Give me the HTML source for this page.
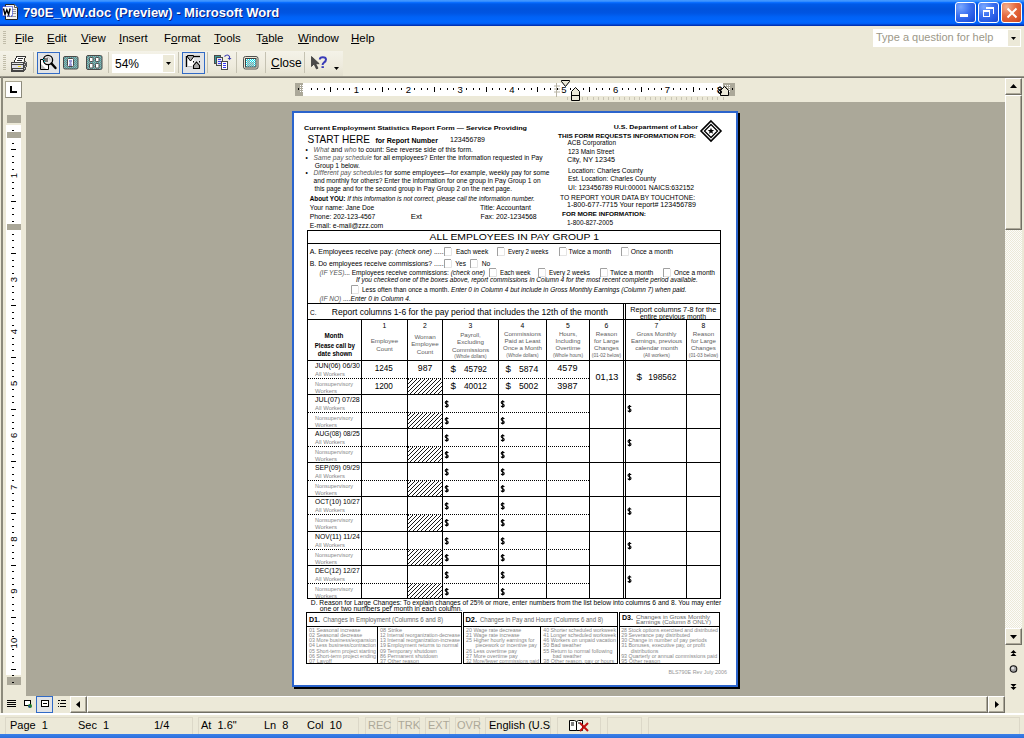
<!DOCTYPE html>
<html><head><meta charset="utf-8">
<style>
*{margin:0;padding:0;box-sizing:border-box}
html,body{width:1024px;height:738px;overflow:hidden;background:#ECE9D8;font-family:"Liberation Sans",sans-serif;position:relative}
.a{position:absolute}
svg{position:absolute;overflow:visible}
#title{left:0;top:0;width:1024px;height:26px;background:linear-gradient(#4499FF 0px,#3B92FF 1.2px,#0A6EFF 2.5px,#005AE8 4px,#0053DC 9px,#0055E2 13px,#0062F6 17px,#0066FF 22px,#005CF2 24px,#0034B8 25px,#0030B0 26px)}
#title .t{left:23px;top:5px;color:#fff;font-weight:bold;font-size:13px;white-space:nowrap;text-shadow:1px 1px 0 #0A1E80}
.wb{top:2px;width:21px;height:21px;border:1px solid #fff;border-radius:3px;background:radial-gradient(circle at 25% 20%,#7AA8FF,#3A70F0 45%,#2155E0 80%,#1A48C8)}
#menu{left:0;top:26px;width:1024px;height:25px;background:#ECE9D8}
#menu span{position:absolute;top:6px;font-size:11.5px;color:#000;white-space:nowrap}
u{text-decoration:underline;text-decoration-thickness:1px;text-underline-offset:0.5px}
#tb{left:0;top:51px;width:1024px;height:25px;background:#ECE9D8}
.grip{width:3px;background:repeating-linear-gradient(#C1BDA9 0 1px,transparent 1px 2px)}
.sep{width:1px;height:21px;top:52px;background:#C5C2B2}
.selb{top:52px;height:22px;border:1px solid #316AC5;background:#E1E3E6}
#main{left:26px;top:102px;width:979px;height:594px;background:#ABA899}
.st{position:absolute;top:719px;font-size:11px;color:#000;white-space:nowrap}
.sdiv{position:absolute;top:716px;width:2px;height:16px;border-left:1px solid #D6D2C2;border-right:1px solid #fff}
</style></head><body>
<!-- title bar -->
<div id="title" class="a">
  <svg style="left:0;top:0" width="20" height="22">
  <path d="M5.5 4.5h9l3 3v12h-12z" fill="#F4F4F0" stroke="#222"/>
  <path d="M14.5 4.5v3h3" fill="#fff" stroke="#555"/>
  <path d="M12 9.5h4M12 11.5h4M12 13.5h4M7 16.5h9" stroke="#999"/>
  <rect x="2.5" y="6.5" width="10" height="9.5" fill="#fff" stroke="#1020D0" stroke-dasharray="1 1"/>
  <path d="M3.5 8.5l1.5 6 1.8-4.5 1.8 4.5 1.5-6" fill="none" stroke="#000" stroke-width="1.4"/>
</svg>
  <div class="a t">790E_WW.doc (Preview) - Microsoft Word</div>
  <div class="a wb" style="left:955px"><div class="a" style="left:4px;top:11px;width:8px;height:3px;background:#fff"></div></div>
  <div class="a wb" style="left:978px"><div class="a" style="left:4px;top:7px;width:7px;height:7px;border:1.5px solid #fff;border-top-width:2px"></div><div class="a" style="left:7px;top:4px;width:8px;height:7px;border:1.5px solid #fff;border-top-width:2px;border-left:none;border-bottom:none"></div></div>
  <div class="a wb" style="left:1001px;background:radial-gradient(circle at 25% 20%,#F4B090,#E5693E 45%,#D8532A 80%,#C24018)"><svg style="left:3px;top:3px" width="14" height="14"><path d="M2.5 2.5L11.5 11.5M11.5 2.5L2.5 11.5" stroke="#fff" stroke-width="2"/></svg></div>
</div>
<!-- menu bar -->
<div id="menu" class="a">
  <div class="a grip" style="left:3px;top:5px;height:14px"></div>
  <span style="left:15px"><u>F</u>ile</span><span style="left:47px"><u>E</u>dit</span><span style="left:81px"><u>V</u>iew</span><span style="left:119px"><u>I</u>nsert</span><span style="left:164px">F<u>o</u>rmat</span><span style="left:214px"><u>T</u>ools</span><span style="left:256px">T<u>a</u>ble</span><span style="left:298px"><u>W</u>indow</span><span style="left:351px"><u>H</u>elp</span>
  <div class="a" style="left:873px;top:3px;width:148px;height:18px;background:#fff"><span style="left:3px;top:2px;color:#9C9888;font-size:11px">Type a question for help</span>
    <div class="a" style="left:135px;top:1px;width:12px;height:16px;background:#ECE9D8"><svg style="left:3px;top:7px" width="6" height="4"><path d="M0 0h5l-2.5 3z" fill="#000"/></svg></div></div>
</div>
<!-- toolbar -->
<div id="tb" class="a">
  <div class="a" style="left:0;top:0;width:343px;height:25px;background:linear-gradient(#F4F2E8,#EEEBDD 60%,#E4E1D0)"></div>
</div>
<div class="a grip" style="left:3px;top:55px;height:15px"></div>
<svg style="left:8px;top:52px" width="24" height="22" shape-rendering="crispEdges">
  <path d="M8 4h9v1h-1v1h-1v4H6V8h1V6h1z" fill="#fff"/>
  <path d="M8 4h9M8 4v2M7 6v2M6 8v2M17 4v2M16 6v4M10 6h5M9 8h5" stroke="#333" fill="none"/>
  <rect x="3" y="10" width="13" height="10" fill="#444"/>
  <rect x="4" y="11" width="11" height="1" fill="#E4E4E4"/>
  <rect x="4" y="13" width="11" height="3" fill="#E0E0E8"/>
  <rect x="10" y="14" width="3" height="1" fill="#F0E020"/>
  <rect x="5" y="17" width="10" height="1" fill="#DCDCDC"/>
  <path d="M16 9h2v1h1v5h-1v3h-1v1h-1z" fill="#555"/>
  <path d="M17 10h1M16 12h1M17 14h1M16 16h1" stroke="#ccc"/>
</svg>
<div class="a sep" style="left:33px"></div>
<div class="a selb" style="left:37px;width:23px"></div>
<svg style="left:36px;top:51px" width="26" height="24">
  <path d="M4.5 8.5h8v10h-8z" fill="#fff" stroke="#000"/>
  <path d="M5 13l5 5H5z" fill="#C0C0C0"/>
  <circle cx="12" cy="9" r="4.6" fill="#E8E8E8" stroke="#000" stroke-width="1.3"/>
  <path d="M11 6.5a2.5 2.5 0 0 1 3 3" stroke="#bbb" fill="none"/>
  <path d="M7 8h5M8 10h4" stroke="#000" stroke-width="1"/>
  <path d="M7 8.5h1M8 10.5h1" stroke="#00E0F0" stroke-width="1.2"/>
  <path d="M15.5 12.5L19.5 17" stroke="#000" stroke-width="2.4" stroke-linecap="round"/>
</svg>
<svg style="left:63px;top:56px" width="16" height="14">
  <defs><pattern id="dt" width="2" height="2" patternUnits="userSpaceOnUse"><rect width="2" height="2" fill="#3FA5A5"/><rect width="1" height="1" fill="#A8A8A8"/><rect x="1" y="1" width="1" height="1" fill="#A8A8A8"/></pattern></defs>
  <rect x="0.5" y="0.5" width="14.5" height="12.5" rx="1.5" fill="url(#dt)" stroke="#4A4A4A"/>
  <rect x="4.5" y="2.5" width="6" height="8" rx="1" fill="#fff" stroke="#4A4A4A"/>
  <path d="M6 5h3M6.5 7h2M6 9h3" stroke="#3030B0"/>
</svg>
<svg style="left:86px;top:55px" width="17" height="16">
  <rect x="0.5" y="0.5" width="15.5" height="14" rx="1.5" fill="url(#dt)" stroke="#4A4A4A"/>
  <rect x="3.5" y="2.5" width="3.5" height="4" rx="0.8" fill="#fff" stroke="#4A4A4A"/>
  <rect x="9.5" y="2.5" width="3.5" height="4" rx="0.8" fill="#fff" stroke="#4A4A4A"/>
  <rect x="3.5" y="8.5" width="3.5" height="4.5" rx="0.8" fill="#fff" stroke="#4A4A4A"/>
  <rect x="9.5" y="8.5" width="3.5" height="4.5" rx="0.8" fill="#fff" stroke="#4A4A4A"/>
</svg>
<div class="a sep" style="left:108px"></div>
<div class="a" style="left:112px;top:54px;width:63px;height:19px;background:#fff">
  <span class="a" style="left:3px;top:3px;font-size:12px">54%</span>
  <div class="a" style="left:51px;top:1px;width:11px;height:17px;background:#ECE9D8"><svg style="left:3px;top:7px" width="6" height="4"><path d="M0 0h5l-2.5 3z" fill="#000"/></svg></div>
</div>
<div class="a sep" style="left:178px"></div>
<div class="a selb" style="left:182px;width:23px"></div>
<svg style="left:180px;top:51px" width="26" height="24">
  <path d="M6 5h8v10H6z" fill="#fff"/>
  <path d="M6.5 5v11" stroke="#000" stroke-width="1.4"/>
  <path d="M14 5.5h6" stroke="#000" stroke-width="1.3"/>
  <path d="M7 15.5h5" stroke="#bbb"/>
  <path d="M7.5 4.5h6v1.5l-3 4-3-4z" fill="#aaa" stroke="#000" stroke-width="1"/>
  <path d="M13.5 17.5v-3l3-3.5 3 3.5v3z" fill="#aaa" stroke="#000" stroke-width="1.1"/>
  <rect x="13" y="10" width="1" height="1.5" fill="#000"/><rect x="19" y="10" width="1" height="1.5" fill="#000"/>
</svg>
<div class="a sep" style="left:207px"></div>
<svg style="left:210px;top:52px" width="24" height="20">
  <rect x="4.5" y="3.5" width="6" height="8" fill="#3A9A98" stroke="#4A4A4A"/>
  <rect x="6.5" y="5.5" width="6" height="8" fill="#E8E8F0" stroke="#4A4A4A"/>
  <path d="M8 7.5h3M8 9.5h3M8 11.5h3" stroke="#3838F0"/>
  <rect x="11.5" y="9.5" width="6" height="8" fill="#fff" stroke="#4A4A4A"/>
  <path d="M13 11.5h3M13 13.5h3M13 15.5h3" stroke="#3838F0"/>
  <path d="M14.5 4.5q3-3 5 0v2" fill="none" stroke="#3A3AB0" stroke-width="1.1"/><path d="M17.5 6h4l-2 2z" fill="#3A3AB0"/>
</svg>
<div class="a sep" style="left:236px"></div>
<svg style="left:243px;top:56px" width="16" height="14">
  <defs><pattern id="cy" width="2" height="2" patternUnits="userSpaceOnUse"><rect width="2" height="2" fill="#00E8F8"/><rect width="1" height="1" fill="#fff"/><rect x="1" y="1" width="1" height="1" fill="#fff"/></pattern></defs>
  <rect x="0.5" y="0.5" width="14.5" height="12.5" rx="2" fill="#ECE9D8" stroke="#505050"/>
  <rect x="2.5" y="2.5" width="10.5" height="8.5" fill="url(#cy)" stroke="#404040"/>
  <path d="M4 5h3M4 7h7M4 9h7" stroke="#999"/>
</svg>
<div class="a sep" style="left:265px"></div>
<span class="a" style="left:271px;top:56px;font-size:12px"><u>C</u>lose</span>
<div class="a sep" style="left:304px"></div>
<svg style="left:310px;top:56px" width="20" height="16">
  <path d="M1.5 0.5v10l2.5-2.5 2.5 5 1.5-0.8-2.3-4.5h3.5z" fill="#4A4A4A" stroke="#3A3A3A" stroke-width="0.8"/>
  <path d="M9.8 3.6Q9.8 1.2 12.8 1.2Q16 1.2 16 3.6Q16 5.4 14 6.5Q12.6 7.4 12.6 9" fill="none" stroke="#3A3CB8" stroke-width="2"/>
  <rect x="11.5" y="10.2" width="2.4" height="1.8" fill="#3A3CB8"/>
</svg>
<svg style="left:334px;top:67px" width="6" height="4"><path d="M0 0h5l-2.5 3z" fill="#000"/></svg>
<div class="a" style="left:0;top:76px;width:1024px;height:1px;background:#9A978A"></div>
<div class="a" style="left:0;top:77px;width:1024px;height:1px;background:#75736A"></div>
<!-- frame left -->
<div class="a" style="left:1px;top:77px;width:2px;height:619px;background:#8C8A7C"></div>
<!-- main gray -->
<div id="main" class="a"></div>
<div class="a" style="left:5px;top:81px;width:17px;height:17px;background:#fff;border:1px solid #A8A490;border-right-color:#8C8A7C;border-bottom-color:#8C8A7C"><svg style="left:4px;top:4px" width="8" height="8"><path d="M1 0v6h6" stroke="#000" stroke-width="2" fill="none"/></svg></div>
<div class="a" style="left:295px;top:83px;width:440px;height:13px;background:#fff"></div>
<div class="a" style="left:295px;top:83px;width:8px;height:13px;background:#ABA899"></div>
<div class="a" style="left:723px;top:83px;width:12px;height:13px;background:#ABA899"></div>
<!--HR--><svg style="left:0;top:0" width="1024" height="110" font-family="Liberation Sans"><rect x="300" y="85" width="1" height="1" fill="#fff"/><rect x="300" y="87" width="1" height="1" fill="#fff"/><rect x="300" y="89" width="1" height="1" fill="#fff"/><rect x="300" y="91" width="1" height="1" fill="#fff"/><rect x="302" y="85" width="1" height="1" fill="#fff"/><rect x="302" y="87" width="1" height="1" fill="#fff"/><rect x="302" y="89" width="1" height="1" fill="#fff"/><rect x="302" y="91" width="1" height="1" fill="#fff"/><rect x="304" y="85" width="1" height="1" fill="#fff"/><rect x="304" y="87" width="1" height="1" fill="#fff"/><rect x="304" y="89" width="1" height="1" fill="#fff"/><rect x="304" y="91" width="1" height="1" fill="#fff"/><rect x="725" y="85" width="1" height="1" fill="#fff"/><rect x="725" y="87" width="1" height="1" fill="#fff"/><rect x="725" y="89" width="1" height="1" fill="#fff"/><rect x="725" y="91" width="1" height="1" fill="#fff"/><rect x="727" y="85" width="1" height="1" fill="#fff"/><rect x="727" y="87" width="1" height="1" fill="#fff"/><rect x="727" y="89" width="1" height="1" fill="#fff"/><rect x="727" y="91" width="1" height="1" fill="#fff"/><rect x="729" y="85" width="1" height="1" fill="#fff"/><rect x="729" y="87" width="1" height="1" fill="#fff"/><rect x="729" y="89" width="1" height="1" fill="#fff"/><rect x="729" y="91" width="1" height="1" fill="#fff"/><path d="M556.5 83v14M554 86h6M554 89h6M554 92h6" stroke="#B8B4A4" stroke-width="1"/><rect x="298" y="88" width="1" height="2"/><rect x="298" y="88" width="1" height="2"/><rect x="311" y="88" width="1" height="2"/><rect x="317" y="88" width="1" height="2"/><rect x="324" y="88" width="1" height="2"/><rect x="330" y="87" width="1" height="5"/><rect x="337" y="88" width="1" height="2"/><rect x="343" y="88" width="1" height="2"/><rect x="349" y="88" width="1" height="2"/><text x="356.4" y="92.8" font-size="9.5" text-anchor="middle">1</text><rect x="362" y="88" width="1" height="2"/><rect x="369" y="88" width="1" height="2"/><rect x="375" y="88" width="1" height="2"/><rect x="382" y="87" width="1" height="5"/><rect x="388" y="88" width="1" height="2"/><rect x="395" y="88" width="1" height="2"/><rect x="401" y="88" width="1" height="2"/><text x="408.3" y="92.8" font-size="9.5" text-anchor="middle">2</text><rect x="414" y="88" width="1" height="2"/><rect x="421" y="88" width="1" height="2"/><rect x="427" y="88" width="1" height="2"/><rect x="434" y="87" width="1" height="5"/><rect x="440" y="88" width="1" height="2"/><rect x="447" y="88" width="1" height="2"/><rect x="453" y="88" width="1" height="2"/><text x="460.1" y="92.8" font-size="9.5" text-anchor="middle">3</text><rect x="466" y="88" width="1" height="2"/><rect x="473" y="88" width="1" height="2"/><rect x="479" y="88" width="1" height="2"/><rect x="486" y="87" width="1" height="5"/><rect x="492" y="88" width="1" height="2"/><rect x="499" y="88" width="1" height="2"/><rect x="505" y="88" width="1" height="2"/><text x="512.0" y="92.8" font-size="9.5" text-anchor="middle">4</text><rect x="518" y="88" width="1" height="2"/><rect x="524" y="88" width="1" height="2"/><rect x="531" y="88" width="1" height="2"/><rect x="537" y="87" width="1" height="5"/><rect x="544" y="88" width="1" height="2"/><rect x="550" y="88" width="1" height="2"/><rect x="557" y="88" width="1" height="2"/><text x="563.8" y="92.8" font-size="9.5" text-anchor="middle">5</text><rect x="570" y="88" width="1" height="2"/><rect x="576" y="88" width="1" height="2"/><rect x="583" y="88" width="1" height="2"/><rect x="589" y="87" width="1" height="5"/><rect x="596" y="88" width="1" height="2"/><rect x="602" y="88" width="1" height="2"/><rect x="609" y="88" width="1" height="2"/><text x="615.6" y="92.8" font-size="9.5" text-anchor="middle">6</text><rect x="622" y="88" width="1" height="2"/><rect x="628" y="88" width="1" height="2"/><rect x="635" y="88" width="1" height="2"/><rect x="641" y="87" width="1" height="5"/><rect x="648" y="88" width="1" height="2"/><rect x="654" y="88" width="1" height="2"/><rect x="661" y="88" width="1" height="2"/><text x="667.5" y="92.8" font-size="9.5" text-anchor="middle">7</text><rect x="673" y="88" width="1" height="2"/><rect x="680" y="88" width="1" height="2"/><rect x="686" y="88" width="1" height="2"/><rect x="693" y="87" width="1" height="5"/><rect x="699" y="88" width="1" height="2"/><rect x="706" y="88" width="1" height="2"/><rect x="712" y="88" width="1" height="2"/><text x="719.3" y="92.8" font-size="9.5" text-anchor="middle">8</text><rect x="725" y="88" width="1" height="2"/><rect x="732" y="88" width="1" height="2"/><rect x="567" y="97" width="1" height="3" fill="#C8C4B4"/><rect x="582" y="97" width="1" height="3" fill="#C8C4B4"/><rect x="587" y="97" width="1" height="3" fill="#C8C4B4"/><rect x="593" y="97" width="1" height="3" fill="#C8C4B4"/><rect x="598" y="97" width="1" height="3" fill="#C8C4B4"/><rect x="603" y="97" width="1" height="3" fill="#C8C4B4"/><rect x="608" y="97" width="1" height="3" fill="#C8C4B4"/><rect x="613" y="97" width="1" height="3" fill="#C8C4B4"/><rect x="619" y="97" width="1" height="3" fill="#C8C4B4"/><rect x="624" y="97" width="1" height="3" fill="#C8C4B4"/><rect x="629" y="97" width="1" height="3" fill="#C8C4B4"/><rect x="634" y="97" width="1" height="3" fill="#C8C4B4"/><rect x="639" y="97" width="1" height="3" fill="#C8C4B4"/><rect x="645" y="97" width="1" height="3" fill="#C8C4B4"/><rect x="650" y="97" width="1" height="3" fill="#C8C4B4"/><rect x="655" y="97" width="1" height="3" fill="#C8C4B4"/><rect x="660" y="97" width="1" height="3" fill="#C8C4B4"/><rect x="665" y="97" width="1" height="3" fill="#C8C4B4"/><rect x="671" y="97" width="1" height="3" fill="#C8C4B4"/><rect x="676" y="97" width="1" height="3" fill="#C8C4B4"/><rect x="681" y="97" width="1" height="3" fill="#C8C4B4"/><rect x="686" y="97" width="1" height="3" fill="#C8C4B4"/><rect x="691" y="97" width="1" height="3" fill="#C8C4B4"/><rect x="697" y="97" width="1" height="3" fill="#C8C4B4"/><rect x="702" y="97" width="1" height="3" fill="#C8C4B4"/><rect x="707" y="97" width="1" height="3" fill="#C8C4B4"/><rect x="712" y="97" width="1" height="3" fill="#C8C4B4"/><rect x="717" y="97" width="1" height="3" fill="#C8C4B4"/><rect x="723" y="97" width="1" height="3" fill="#C8C4B4"/><path d="M561.5 80.5h8v1l-4 5-4-5z" fill="#ECE9D8" stroke="#000"/><path d="M571.5 100.5v-9l4-4 4 4v9z" fill="#ECE9D8" stroke="#000"/><path d="M571.5 95.5h8" stroke="#000"/><path d="M720.5 95.5v-5l4-4 4 4v5z" fill="#ECE9D8" stroke="#000"/><circle cx="720" cy="88.5" r="1.6" fill="none" stroke="#000"/><circle cx="720" cy="92" r="1.6" fill="none" stroke="#000"/></svg><!--/HR-->
<div class="a" style="left:7px;top:115px;width:14px;height:8px;background:#ABA899"></div>
<div class="a" style="left:6px;top:125px;width:15px;height:550px;background:#fff"></div>
<div class="a" style="left:7px;top:132px;width:14px;height:6px;background:#ABA899"></div>
<div class="a" style="left:7px;top:677px;width:14px;height:8px;background:#ABA899"></div>
<!--VR--><svg style="left:0;top:0" width="30" height="700" font-family="Liberation Sans"><rect x="12" y="130" width="2" height="1"/><rect x="12" y="143" width="2" height="1"/><rect x="11" y="149" width="5" height="1"/><rect x="12" y="156" width="2" height="1"/><rect x="12" y="162" width="2" height="1"/><rect x="12" y="169" width="2" height="1"/><text transform="translate(17.3 175.7) rotate(-90)" font-size="9.5" text-anchor="middle">1</text><rect x="12" y="182" width="2" height="1"/><rect x="12" y="188" width="2" height="1"/><rect x="12" y="195" width="2" height="1"/><rect x="11" y="201" width="5" height="1"/><rect x="12" y="208" width="2" height="1"/><rect x="12" y="214" width="2" height="1"/><rect x="12" y="221" width="2" height="1"/><rect x="12" y="234" width="2" height="1"/><rect x="12" y="240" width="2" height="1"/><rect x="12" y="247" width="2" height="1"/><rect x="11" y="253" width="5" height="1"/><rect x="12" y="260" width="2" height="1"/><rect x="12" y="266" width="2" height="1"/><rect x="12" y="273" width="2" height="1"/><text transform="translate(17.3 279.6) rotate(-90)" font-size="9.5" text-anchor="middle">3</text><rect x="12" y="286" width="2" height="1"/><rect x="12" y="292" width="2" height="1"/><rect x="12" y="299" width="2" height="1"/><rect x="11" y="305" width="5" height="1"/><rect x="12" y="312" width="2" height="1"/><rect x="12" y="318" width="2" height="1"/><rect x="12" y="325" width="2" height="1"/><text transform="translate(17.3 331.5) rotate(-90)" font-size="9.5" text-anchor="middle">4</text><rect x="12" y="338" width="2" height="1"/><rect x="12" y="344" width="2" height="1"/><rect x="12" y="350" width="2" height="1"/><rect x="11" y="357" width="5" height="1"/><rect x="12" y="363" width="2" height="1"/><rect x="12" y="370" width="2" height="1"/><rect x="12" y="376" width="2" height="1"/><text transform="translate(17.3 383.4) rotate(-90)" font-size="9.5" text-anchor="middle">5</text><rect x="12" y="389" width="2" height="1"/><rect x="12" y="396" width="2" height="1"/><rect x="12" y="402" width="2" height="1"/><rect x="11" y="409" width="5" height="1"/><rect x="12" y="415" width="2" height="1"/><rect x="12" y="422" width="2" height="1"/><rect x="12" y="428" width="2" height="1"/><text transform="translate(17.3 435.4) rotate(-90)" font-size="9.5" text-anchor="middle">6</text><rect x="12" y="441" width="2" height="1"/><rect x="12" y="448" width="2" height="1"/><rect x="12" y="454" width="2" height="1"/><rect x="11" y="461" width="5" height="1"/><rect x="12" y="467" width="2" height="1"/><rect x="12" y="474" width="2" height="1"/><rect x="12" y="480" width="2" height="1"/><text transform="translate(17.3 487.3) rotate(-90)" font-size="9.5" text-anchor="middle">7</text><rect x="12" y="493" width="2" height="1"/><rect x="12" y="500" width="2" height="1"/><rect x="12" y="506" width="2" height="1"/><rect x="11" y="513" width="5" height="1"/><rect x="12" y="519" width="2" height="1"/><rect x="12" y="526" width="2" height="1"/><rect x="12" y="532" width="2" height="1"/><text transform="translate(17.3 539.2) rotate(-90)" font-size="9.5" text-anchor="middle">8</text><rect x="12" y="545" width="2" height="1"/><rect x="12" y="552" width="2" height="1"/><rect x="12" y="558" width="2" height="1"/><rect x="11" y="565" width="5" height="1"/><rect x="12" y="571" width="2" height="1"/><rect x="12" y="578" width="2" height="1"/><rect x="12" y="584" width="2" height="1"/><text transform="translate(17.3 591.2) rotate(-90)" font-size="9.5" text-anchor="middle">9</text><rect x="12" y="597" width="2" height="1"/><rect x="12" y="604" width="2" height="1"/><rect x="12" y="610" width="2" height="1"/><rect x="11" y="617" width="5" height="1"/><rect x="12" y="623" width="2" height="1"/><rect x="12" y="630" width="2" height="1"/><rect x="12" y="636" width="2" height="1"/><text transform="translate(17.3 643.1) rotate(-90)" font-size="9.5" text-anchor="middle">10</text><rect x="12" y="649" width="2" height="1"/><rect x="12" y="656" width="2" height="1"/><rect x="12" y="662" width="2" height="1"/><rect x="11" y="669" width="5" height="1"/><rect x="12" y="675" width="2" height="1"/><rect x="12" y="682" width="2" height="1"/></svg><!--/VR-->
<div class="a" style="left:7px;top:224px;width:14px;height:6px;background:#ABA899"></div>
<div class="a" style="left:1005px;top:78px;width:17px;height:618px;background:#F4F3EE;background-image:repeating-conic-gradient(#ECE9D8 0 25%,#FCFCFA 0 50%);background-size:2px 2px"></div>
<div class="a" style="left:1005px;top:78px;width:17px;height:17px;background:#ECE9D8;border-top:1px solid #fff;border-left:1px solid #fff;border-right:1px solid #716F64;border-bottom:1px solid #716F64;box-shadow:inset -1px -1px 0 #ACA899"><svg style="left:4px;top:5px" width="8" height="5"><path d="M0 4h7l-3.5-4z" fill="#000"/></svg></div>
<div class="a" style="left:1005px;top:95px;width:17px;height:135px;background:#ECE9D8;border-top:1px solid #fff;border-left:1px solid #fff;border-right:1px solid #716F64;border-bottom:1px solid #716F64;box-shadow:inset -1px -1px 0 #ACA899"></div>
<div class="a" style="left:1005px;top:628px;width:17px;height:17px;background:#ECE9D8;border-top:1px solid #fff;border-left:1px solid #fff;border-right:1px solid #716F64;border-bottom:1px solid #716F64;box-shadow:inset -1px -1px 0 #ACA899"><svg style="left:4px;top:6px" width="8" height="5"><path d="M0 0h7l-3.5 4z" fill="#000"/></svg></div>
<div class="a" style="left:1005px;top:645px;width:17px;height:51px;background:#ECE9D8"></div>
<svg style="left:1005px;top:645px" width="17" height="51"><path d="M5.5 8h6l-3-3z M5.5 11h6l-3-3z" fill="#000"/><circle cx="8.5" cy="24" r="3.3" fill="#A0A0A0" stroke="#111" stroke-width="1.1"/><circle cx="7.8" cy="23.2" r="1.4" fill="#E0E0E0"/><path d="M5.5 39h6l-3 3z M5.5 42h6l-3 3z" fill="#000"/></svg>

<div class="a" style="left:0;top:696px;width:1024px;height:18px;background:#ECE9D8"></div>
<div class="a" style="left:1px;top:696px;width:2px;height:17px;background:#8C8A7C"></div>
<svg style="left:0;top:696px" width="70" height="17"><path d="M7 4.5h9M7 6.5h9M7 8.5h9M7 10.5h9" stroke="#000"/><rect x="24.5" y="4.5" width="6" height="5" fill="#fff" stroke="#000"/><circle cx="30" cy="10" r="2" fill="#208020"/><circle cx="29.5" cy="10.5" r="1" fill="#2040C0"/><rect x="36.5" y="0.5" width="16" height="16" fill="#E1E3E6" stroke="#316AC5"/><rect x="41.5" y="4.5" width="7" height="6" fill="#fff" stroke="#000"/><path d="M43 7.5h4" stroke="#000"/><path d="M58 4.5h2M61 4.5h5M60 7.5h6M60 10.5h6M58 10.5h1M58 7.5h1" stroke="#000"/></svg>
<div class="a" style="left:70px;top:696px;width:17px;height:17px;background:#ECE9D8;border-top:1px solid #fff;border-left:1px solid #fff;border-right:1px solid #716F64;border-bottom:1px solid #716F64;box-shadow:inset -1px -1px 0 #ACA899"><svg style="left:5px;top:4px" width="5" height="8"><path d="M4 0v7l-4-3.5z" fill="#000"/></svg></div>
<div class="a" style="left:87px;top:696px;width:901px;height:17px;background:#ECE9D8;border-top:1px solid #fff;border-left:1px solid #fff;border-right:1px solid #716F64;border-bottom:1px solid #716F64;box-shadow:inset -1px -1px 0 #ACA899"></div>
<div class="a" style="left:988px;top:696px;width:17px;height:17px;background:#ECE9D8;border-top:1px solid #fff;border-left:1px solid #fff;border-right:1px solid #716F64;border-bottom:1px solid #716F64;box-shadow:inset -1px -1px 0 #ACA899"><svg style="left:6px;top:4px" width="5" height="8"><path d="M0 0v7l4-3.5z" fill="#000"/></svg></div>
<div class="a" style="left:0;top:713px;width:1024px;height:2px;background:#fff"></div>
<div class="a" style="left:0;top:715px;width:1024px;height:19px;background:#ECE9D8"></div>
<div class="a" style="left:5px;top:717px;width:188px;height:17px;border:1px solid #DCD8C8;border-bottom:none"></div>
<div class="a" style="left:198px;top:717px;width:161px;height:17px;border:1px solid #DCD8C8;border-bottom:none"></div>
<div class="a" style="left:365px;top:717px;width:26px;height:17px;border:1px solid #DCD8C8;border-bottom:none"></div>
<div class="a" style="left:397px;top:717px;width:23px;height:17px;border:1px solid #DCD8C8;border-bottom:none"></div>
<div class="a" style="left:425px;top:717px;width:25px;height:17px;border:1px solid #DCD8C8;border-bottom:none"></div>
<div class="a" style="left:455px;top:717px;width:25px;height:17px;border:1px solid #DCD8C8;border-bottom:none"></div>
<div class="a" style="left:485px;top:717px;width:66px;height:17px;border:1px solid #DCD8C8;border-bottom:none"></div>
<div class="a" style="left:557px;top:717px;width:44px;height:17px;border:1px solid #DCD8C8;border-bottom:none"></div>
<div class="a" style="left:607px;top:717px;width:35px;height:17px;border:1px solid #DCD8C8;border-bottom:none"></div>
<div class="a" style="left:648px;top:717px;width:372px;height:17px;border:1px solid #DCD8C8;border-bottom:none"></div>
<span class="st" style="left:10px;color:#000">Page&nbsp; 1</span>
<span class="st" style="left:78px;color:#000">Sec&nbsp; 1</span>
<span class="st" style="left:154px;color:#000">1/4</span>
<span class="st" style="left:201px;color:#000">At&nbsp; 1.6"</span>
<span class="st" style="left:264px;color:#000">Ln&nbsp; 8</span>
<span class="st" style="left:307px;color:#000">Col&nbsp; 10</span>
<span class="st" style="left:368px;color:#ACA899">REC</span>
<span class="st" style="left:398px;color:#ACA899">TRK</span>
<span class="st" style="left:428px;color:#ACA899">EXT</span>
<span class="st" style="left:457px;color:#ACA899">OVR</span>
<span class="st" style="left:489px;color:#000">English (U.S</span>
<svg style="left:568px;top:718px" width="22" height="14"><path d="M1.5 2.5h5l2 1v9h-7z M8.5 3.5l2-1h4v10h-6" fill="#fff" stroke="#000"/><path d="M3 5h3M3 7h3M10 5h3" stroke="#000"/><path d="M12 5l8 8M20 5l-8 8" stroke="#C01010" stroke-width="2"/></svg>
<div class="a" style="left:0;top:734px;width:1024px;height:4px;background:linear-gradient(#3A80E8,#2C6FDC)"></div>
<!--PAGE--><svg style="left:0;top:0" width="1024" height="738" font-family="Liberation Sans"><defs><pattern id="hatch" width="4" height="4" patternUnits="userSpaceOnUse"><path d="M-1 1L1 -1M0 4L4 0M3 5L5 3" stroke="#000" stroke-width="0.9"/></pattern></defs><rect x="292" y="111" width="446" height="576" fill="#2B64CC"/><rect x="294" y="113" width="442" height="572" fill="#fff"/><rect x="738" y="113" width="2" height="576" fill="#000"/><rect x="294" y="687" width="446" height="2" fill="#000"/><text x="304.0" y="129.7" font-size="6.2" textLength="223.0" lengthAdjust="spacingAndGlyphs" font-weight="bold">Current Employment Statistics Report Form — Service Providing</text><text x="307.5" y="143.3" font-size="10.5" textLength="62.5" lengthAdjust="spacingAndGlyphs">START HERE</text><text x="375.4" y="142.5" font-size="6.5" textLength="62.6" lengthAdjust="spacingAndGlyphs" font-weight="bold">for Report Number</text><text x="450.0" y="142.1" font-size="6.5" textLength="35.0" lengthAdjust="spacingAndGlyphs">123456789</text><text x="305.5" y="151.8" font-size="6.5">•</text><text x="305.5" y="160.1" font-size="6.5">•</text><text x="305.5" y="175.2" font-size="6.5">•</text><text x="313.6" y="151.8" font-size="6.5" textLength="159.4" lengthAdjust="spacingAndGlyphs"><tspan font-style="italic" fill="#555">What</tspan><tspan> and </tspan><tspan font-style="italic" fill="#555">who</tspan><tspan> to count: See reverse side of this form.</tspan></text><text x="313.6" y="160.1" font-size="6.5" textLength="229.0" lengthAdjust="spacingAndGlyphs"><tspan font-style="italic" fill="#555">Same pay schedule</tspan><tspan> for all employees? Enter the information requested in Pay</tspan></text><text x="314.7" y="168.0" font-size="6.5" textLength="45.3" lengthAdjust="spacingAndGlyphs">Group 1 below.</text><text x="313.6" y="175.2" font-size="6.5" textLength="235.8" lengthAdjust="spacingAndGlyphs"><tspan font-style="italic" fill="#555">Different pay schedules</tspan><tspan> for some employees—for example, weekly pay for some</tspan></text><text x="313.6" y="183.0" font-size="6.5" textLength="227.0" lengthAdjust="spacingAndGlyphs">and monthly for others? Enter the information for one group in Pay Group 1 on</text><text x="314.5" y="191.1" font-size="6.5" textLength="197.5" lengthAdjust="spacingAndGlyphs">this page and for the second group in Pay Group 2 on the next page.</text><text x="309.8" y="200.6" font-size="6.5" textLength="225.0" lengthAdjust="spacingAndGlyphs"><tspan font-weight="bold">About YOU: </tspan><tspan font-style="italic">If this information is not correct, please call the information number.</tspan></text><text x="309.8" y="210.2" font-size="6.5" textLength="64.5" lengthAdjust="spacingAndGlyphs">Your name:  Jane Doe</text><text x="480.0" y="210.2" font-size="6.5" textLength="51.0" lengthAdjust="spacingAndGlyphs">Title:  Accountant</text><text x="309.8" y="219.0" font-size="6.5" textLength="65.6" lengthAdjust="spacingAndGlyphs">Phone:  202-123-4567</text><text x="410.7" y="219.0" font-size="6.5" textLength="11.3" lengthAdjust="spacingAndGlyphs">Ext</text><text x="480.5" y="219.0" font-size="6.5" textLength="56.2" lengthAdjust="spacingAndGlyphs">Fax:  202-1234568</text><text x="309.8" y="228.2" font-size="6.5" textLength="73.5" lengthAdjust="spacingAndGlyphs">E-mail:  e-mail@zzz.com</text><text x="613.8" y="129.4" font-size="6.2" textLength="84.2" lengthAdjust="spacingAndGlyphs" font-weight="bold">U.S. Department of Labor</text><text x="558.0" y="137.6" font-size="6.2" textLength="138.0" lengthAdjust="spacingAndGlyphs" font-weight="bold">THIS FORM REQUESTS INFORMATION FOR:</text><text x="567.5" y="144.6" font-size="6.5" textLength="48.5" lengthAdjust="spacingAndGlyphs">ACB Corporation</text><text x="568.0" y="153.9" font-size="6.5" textLength="46.0" lengthAdjust="spacingAndGlyphs">123 Main Street</text><text x="567.0" y="162.2" font-size="6.5" textLength="48.0" lengthAdjust="spacingAndGlyphs">City, NY   12345</text><text x="568.0" y="172.5" font-size="6.5" textLength="75.0" lengthAdjust="spacingAndGlyphs">Location:  Charles County</text><text x="568.0" y="180.7" font-size="6.5" textLength="88.0" lengthAdjust="spacingAndGlyphs">Est. Location:  Charles County</text><text x="568.0" y="189.5" font-size="6.5" textLength="126.0" lengthAdjust="spacingAndGlyphs">UI: 123456789   RUI:00001  NAICS:632152</text><text x="560.0" y="199.7" font-size="6.5" textLength="135.0" lengthAdjust="spacingAndGlyphs">TO REPORT YOUR DATA BY TOUCHTONE:</text><text x="567.0" y="206.5" font-size="6.5" textLength="129.0" lengthAdjust="spacingAndGlyphs">1-800-677-7715      Your report# 123456789</text><text x="562.0" y="216.3" font-size="6.2" textLength="84.0" lengthAdjust="spacingAndGlyphs" font-weight="bold">FOR MORE INFORMATION:</text><text x="567.0" y="224.6" font-size="6.5" textLength="46.0" lengthAdjust="spacingAndGlyphs">1-800-827-2005</text><g transform="translate(711 131)"><path d="M0 -10L10 0L0 10L-10 0Z" fill="none" stroke="#000" stroke-width="1.6"/><path d="M0 -6.5L6.5 0L0 6.5L-6.5 0Z" fill="none" stroke="#000" stroke-width="1.3"/><path d="M0 -3.2L0.9 -1L3.2 -1L1.4 0.5L2 2.8L0 1.4L-2 2.8L-1.4 0.5L-3.2 -1L-0.9 -1Z" fill="#000"/></g><path d="M307 230.5H721" stroke="#000"/><path d="M307.5 230V599" stroke="#000"/><path d="M720.5 230V599" stroke="#000"/><text x="429.5" y="240.2" font-size="8.8" textLength="169.5" lengthAdjust="spacingAndGlyphs">ALL EMPLOYEES IN PAY GROUP 1</text><text x="0.0" y="2.3" font-size="6.5"></text><path d="M307 243.5H721" stroke="#000"/><text x="309.7" y="254.2" font-size="6.5" textLength="134.0" lengthAdjust="spacingAndGlyphs"><tspan>A.  Employees receive pay:  </tspan><tspan font-style="italic">(check one)</tspan><tspan> .....</tspan></text><path d="M444.5 256V247.5H451" fill="none" stroke="#A0A0A0"/><path d="M445 255.5H451.5V248" fill="none" stroke="#E4E4E4"/><text x="455.9" y="254.2" font-size="6.5" textLength="32.3" lengthAdjust="spacingAndGlyphs">Each week</text><path d="M497.5 256V247.5H504" fill="none" stroke="#A0A0A0"/><path d="M498 255.5H504.5V248" fill="none" stroke="#E4E4E4"/><text x="507.9" y="254.2" font-size="6.5" textLength="40.4" lengthAdjust="spacingAndGlyphs">Every 2 weeks</text><path d="M559.5 256V247.5H566" fill="none" stroke="#A0A0A0"/><path d="M560 255.5H566.5V248" fill="none" stroke="#E4E4E4"/><text x="568.5" y="254.2" font-size="6.5" textLength="42.7" lengthAdjust="spacingAndGlyphs">Twice a month</text><path d="M621.5 256V247.5H628" fill="none" stroke="#A0A0A0"/><path d="M622 255.5H628.5V248" fill="none" stroke="#E4E4E4"/><text x="630.8" y="254.2" font-size="6.5" textLength="42.2" lengthAdjust="spacingAndGlyphs">Once a month</text><text x="309.7" y="266.0" font-size="6.5" textLength="134.0" lengthAdjust="spacingAndGlyphs"><tspan>B.  Do employees receive commissions? .....</tspan></text><path d="M444.5 268V259.5H451" fill="none" stroke="#A0A0A0"/><path d="M445 267.5H451.5V260" fill="none" stroke="#E4E4E4"/><text x="455.3" y="266.0" font-size="6.5" textLength="10.7" lengthAdjust="spacingAndGlyphs">Yes</text><path d="M470.5 268V259.5H477" fill="none" stroke="#A0A0A0"/><path d="M471 267.5H477.5V260" fill="none" stroke="#E4E4E4"/><text x="481.7" y="266.0" font-size="6.5" textLength="8.6" lengthAdjust="spacingAndGlyphs">No</text><text x="319.4" y="274.6" font-size="6.5" textLength="165.6" lengthAdjust="spacingAndGlyphs"><tspan font-style="italic" fill="#555">(IF YES)</tspan><tspan>... Employees receive commissions:  </tspan><tspan font-style="italic">(check one)</tspan></text><path d="M489.5 277V268.5H496" fill="none" stroke="#A0A0A0"/><path d="M490 276.5H496.5V269" fill="none" stroke="#E4E4E4"/><text x="500.0" y="274.6" font-size="6.5" textLength="30.3" lengthAdjust="spacingAndGlyphs">Each week</text><path d="M538.5 277V268.5H545" fill="none" stroke="#A0A0A0"/><path d="M539 276.5H545.5V269" fill="none" stroke="#E4E4E4"/><text x="549.0" y="274.6" font-size="6.5" textLength="40.9" lengthAdjust="spacingAndGlyphs">Every 2 weeks</text><path d="M600.5 277V268.5H607" fill="none" stroke="#A0A0A0"/><path d="M601 276.5H607.5V269" fill="none" stroke="#E4E4E4"/><text x="610.0" y="274.6" font-size="6.5" textLength="43.3" lengthAdjust="spacingAndGlyphs">Twice a month</text><path d="M663.5 277V268.5H670" fill="none" stroke="#A0A0A0"/><path d="M664 276.5H670.5V269" fill="none" stroke="#E4E4E4"/><text x="674.0" y="274.6" font-size="6.5" textLength="41.0" lengthAdjust="spacingAndGlyphs">Once a month</text><text x="356.0" y="282.2" font-size="6.8" textLength="341.8" lengthAdjust="spacingAndGlyphs" font-style="italic">If you checked one of the boxes above, report commissions in Column 4 for the most recent complete period available.</text><path d="M351.5 294V285.5H358" fill="none" stroke="#A0A0A0"/><path d="M352 293.5H358.5V286" fill="none" stroke="#E4E4E4"/><text x="362.0" y="291.8" font-size="6.5" textLength="324.5" lengthAdjust="spacingAndGlyphs"><tspan>Less often than once a month. </tspan><tspan font-style="italic">Enter 0 in Column 4 but include in Gross Monthly Earnings (Column 7) when paid.</tspan></text><text x="319.4" y="301.1" font-size="6.5" textLength="91.4" lengthAdjust="spacingAndGlyphs"><tspan font-style="italic" fill="#555">(IF NO)</tspan><tspan font-style="italic"> ....Enter 0 in Column 4.</tspan></text><path d="M307 303.5H721" stroke="#000"/><text x="310.0" y="314.7" font-size="7.5" textLength="6.5" lengthAdjust="spacingAndGlyphs">C.</text><text x="331.8" y="315.2" font-size="9" textLength="276.1" lengthAdjust="spacingAndGlyphs">Report columns 1-6 for the pay period that includes the 12th of the month</text><text x="630.3" y="311.8" font-size="6.3" textLength="85.9" lengthAdjust="spacingAndGlyphs">Report columns 7-8 for the</text><text x="640.0" y="318.5" font-size="6.3" textLength="66.0" lengthAdjust="spacingAndGlyphs">entire previous month</text><path d="M307 319.5H721" stroke="#000"/><path d="M361.5 319V599" stroke="#000"/><path d="M407.5 319V599" stroke="#000"/><path d="M442.5 319V599" stroke="#000"/><path d="M498.5 319V599" stroke="#000"/><path d="M546.5 319V599" stroke="#000"/><path d="M589.5 319V599" stroke="#000"/><path d="M623.5 303V599" stroke="#000"/><path d="M625.5 303V599" stroke="#000"/><path d="M686.5 319V599" stroke="#000"/><text x="324.5" y="338.0" font-size="6.8" textLength="18.8" lengthAdjust="spacingAndGlyphs" font-weight="bold">Month</text><text x="314.7" y="348.0" font-size="6.8" textLength="40.3" lengthAdjust="spacingAndGlyphs" font-weight="bold">Please call by</text><text x="317.8" y="356.0" font-size="6.8" textLength="34.4" lengthAdjust="spacingAndGlyphs" font-weight="bold">date shown</text><text x="384.5" y="328.0" font-size="6.8" text-anchor="middle">1</text><text x="384.5" y="342.7" font-size="6.2" text-anchor="middle" fill="#606060">Employee</text><text x="384.5" y="351.2" font-size="6.2" text-anchor="middle" fill="#606060">Count</text><text x="425.0" y="328.0" font-size="6.8" text-anchor="middle">2</text><text x="425.0" y="339.2" font-size="6.2" text-anchor="middle" fill="#606060">Woman</text><text x="425.0" y="345.7" font-size="6.2" text-anchor="middle" fill="#606060">Employee</text><text x="425.0" y="354.2" font-size="6.2" text-anchor="middle" fill="#606060">Count</text><text x="470.5" y="328.0" font-size="6.8" text-anchor="middle">3</text><text x="470.5" y="337.0" font-size="6.2" text-anchor="middle" fill="#606060">Payroll,</text><text x="470.5" y="344.1" font-size="6.2" text-anchor="middle" fill="#606060">Excluding</text><text x="470.5" y="352.1" font-size="6.2" text-anchor="middle" fill="#606060">Commissions</text><text x="470.5" y="358.0" font-size="4.8" text-anchor="middle" fill="#606060">(Whole dollars)</text><text x="522.5" y="328.0" font-size="6.8" text-anchor="middle">4</text><text x="522.5" y="336.4" font-size="6.2" text-anchor="middle" fill="#606060">Commissions</text><text x="522.5" y="343.3" font-size="6.2" text-anchor="middle" fill="#606060">Paid at Least</text><text x="522.5" y="350.1" font-size="6.2" text-anchor="middle" fill="#606060">Once a Month</text><text x="522.5" y="356.7" font-size="4.8" text-anchor="middle" fill="#606060">(Whole dollars)</text><text x="568.0" y="328.0" font-size="6.8" text-anchor="middle">5</text><text x="568.0" y="336.4" font-size="6.2" text-anchor="middle" fill="#606060">Hours,</text><text x="568.0" y="343.3" font-size="6.2" text-anchor="middle" fill="#606060">Including</text><text x="568.0" y="350.1" font-size="6.2" text-anchor="middle" fill="#606060">Overtime</text><text x="568.0" y="356.7" font-size="4.8" text-anchor="middle" fill="#606060">(Whole hours)</text><text x="606.5" y="328.0" font-size="6.8" text-anchor="middle">6</text><text x="606.5" y="336.4" font-size="6.2" text-anchor="middle" fill="#606060">Reason</text><text x="606.5" y="343.3" font-size="6.2" text-anchor="middle" fill="#606060">for Large</text><text x="606.5" y="350.1" font-size="6.2" text-anchor="middle" fill="#606060">Changes</text><text x="606.5" y="356.7" font-size="4.8" text-anchor="middle" fill="#606060">(01-02 below)</text><text x="656.5" y="328.0" font-size="6.8" text-anchor="middle">7</text><text x="656.5" y="336.4" font-size="6.2" text-anchor="middle" fill="#606060">Gross Monthly</text><text x="656.5" y="343.3" font-size="6.2" text-anchor="middle" fill="#606060">Earnings, previous</text><text x="656.5" y="350.1" font-size="6.2" text-anchor="middle" fill="#606060">calendar month</text><text x="656.5" y="356.7" font-size="4.8" text-anchor="middle" fill="#606060">(All workers)</text><text x="703.5" y="328.0" font-size="6.8" text-anchor="middle">8</text><text x="703.5" y="336.4" font-size="6.2" text-anchor="middle" fill="#606060">Reason</text><text x="703.5" y="343.3" font-size="6.2" text-anchor="middle" fill="#606060">for Large</text><text x="703.5" y="350.1" font-size="6.2" text-anchor="middle" fill="#606060">Changes</text><text x="703.5" y="356.7" font-size="4.8" text-anchor="middle" fill="#606060">(01-03 below)</text><path d="M307 360.5H721" stroke="#000"/><path d="M307 394.5H721" stroke="#000"/><path d="M308 378.5H590" stroke="#000" stroke-dasharray="1 1"/><text x="315.0" y="367.9" font-size="6.8" textLength="44.8" lengthAdjust="spacingAndGlyphs">JUN(06)  06/30</text><text x="315.0" y="376.0" font-size="6.2" textLength="30.0" lengthAdjust="spacingAndGlyphs" fill="#888">All Workers</text><text x="315.0" y="386.1" font-size="6.2" textLength="38.0" lengthAdjust="spacingAndGlyphs" fill="#888">Nonsupervisory</text><text x="315.0" y="392.5" font-size="6.2" textLength="22.0" lengthAdjust="spacingAndGlyphs" fill="#888">Workers</text><rect x="408" y="379" width="34" height="15" fill="url(#hatch)"/><path d="M307 428.5H721" stroke="#000"/><path d="M308 412.5H590" stroke="#000" stroke-dasharray="1 1"/><text x="315.0" y="401.9" font-size="6.8" textLength="44.8" lengthAdjust="spacingAndGlyphs">JUL(07)  07/28</text><text x="315.0" y="410.0" font-size="6.2" textLength="30.0" lengthAdjust="spacingAndGlyphs" fill="#888">All Workers</text><text x="315.0" y="420.1" font-size="6.2" textLength="38.0" lengthAdjust="spacingAndGlyphs" fill="#888">Nonsupervisory</text><text x="315.0" y="426.5" font-size="6.2" textLength="22.0" lengthAdjust="spacingAndGlyphs" fill="#888">Workers</text><rect x="408" y="413" width="34" height="15" fill="url(#hatch)"/><path d="M448.2 402.2Q448.2 401.2 446.7 401.2Q445.2 401.2 445.2 402.5Q445.2 403.7 446.7 404.0Q448.2 404.3 448.2 405.5Q448.2 406.8 446.7 406.8Q445.2 406.8 445.2 405.8M446.7 400.2V407.8" fill="none" stroke="#000" stroke-width="1.1"/><path d="M504.2 402.2Q504.2 401.2 502.7 401.2Q501.2 401.2 501.2 402.5Q501.2 403.7 502.7 404.0Q504.2 404.3 504.2 405.5Q504.2 406.8 502.7 406.8Q501.2 406.8 501.2 405.8M502.7 400.2V407.8" fill="none" stroke="#000" stroke-width="1.1"/><path d="M448.2 419.0Q448.2 418.0 446.7 418.0Q445.2 418.0 445.2 419.3Q445.2 420.5 446.7 420.8Q448.2 421.1 448.2 422.3Q448.2 423.6 446.7 423.6Q445.2 423.6 445.2 422.6M446.7 417.0V424.6" fill="none" stroke="#000" stroke-width="1.1"/><path d="M504.2 419.0Q504.2 418.0 502.7 418.0Q501.2 418.0 501.2 419.3Q501.2 420.5 502.7 420.8Q504.2 421.1 504.2 422.3Q504.2 423.6 502.7 423.6Q501.2 423.6 501.2 422.6M502.7 417.0V424.6" fill="none" stroke="#000" stroke-width="1.1"/><path d="M631.0 407.0Q631.0 406.0 629.5 406.0Q628.0 406.0 628.0 407.3Q628.0 408.5 629.5 408.8Q631.0 409.1 631.0 410.3Q631.0 411.6 629.5 411.6Q628.0 411.6 628.0 410.6M629.5 405.0V412.6" fill="none" stroke="#000" stroke-width="1.1"/><path d="M307 462.5H721" stroke="#000"/><path d="M308 446.5H590" stroke="#000" stroke-dasharray="1 1"/><text x="315.0" y="435.9" font-size="6.8" textLength="44.8" lengthAdjust="spacingAndGlyphs">AUG(08)  08/25</text><text x="315.0" y="444.0" font-size="6.2" textLength="30.0" lengthAdjust="spacingAndGlyphs" fill="#888">All Workers</text><text x="315.0" y="454.1" font-size="6.2" textLength="38.0" lengthAdjust="spacingAndGlyphs" fill="#888">Nonsupervisory</text><text x="315.0" y="460.5" font-size="6.2" textLength="22.0" lengthAdjust="spacingAndGlyphs" fill="#888">Workers</text><rect x="408" y="447" width="34" height="15" fill="url(#hatch)"/><path d="M448.2 436.2Q448.2 435.2 446.7 435.2Q445.2 435.2 445.2 436.5Q445.2 437.7 446.7 438.0Q448.2 438.3 448.2 439.5Q448.2 440.8 446.7 440.8Q445.2 440.8 445.2 439.8M446.7 434.2V441.8" fill="none" stroke="#000" stroke-width="1.1"/><path d="M504.2 436.2Q504.2 435.2 502.7 435.2Q501.2 435.2 501.2 436.5Q501.2 437.7 502.7 438.0Q504.2 438.3 504.2 439.5Q504.2 440.8 502.7 440.8Q501.2 440.8 501.2 439.8M502.7 434.2V441.8" fill="none" stroke="#000" stroke-width="1.1"/><path d="M448.2 453.0Q448.2 452.0 446.7 452.0Q445.2 452.0 445.2 453.3Q445.2 454.5 446.7 454.8Q448.2 455.1 448.2 456.3Q448.2 457.6 446.7 457.6Q445.2 457.6 445.2 456.6M446.7 451.0V458.6" fill="none" stroke="#000" stroke-width="1.1"/><path d="M504.2 453.0Q504.2 452.0 502.7 452.0Q501.2 452.0 501.2 453.3Q501.2 454.5 502.7 454.8Q504.2 455.1 504.2 456.3Q504.2 457.6 502.7 457.6Q501.2 457.6 501.2 456.6M502.7 451.0V458.6" fill="none" stroke="#000" stroke-width="1.1"/><path d="M631.0 441.0Q631.0 440.0 629.5 440.0Q628.0 440.0 628.0 441.3Q628.0 442.5 629.5 442.8Q631.0 443.1 631.0 444.3Q631.0 445.6 629.5 445.6Q628.0 445.6 628.0 444.6M629.5 439.0V446.6" fill="none" stroke="#000" stroke-width="1.1"/><path d="M307 496.5H721" stroke="#000"/><path d="M308 480.5H590" stroke="#000" stroke-dasharray="1 1"/><text x="315.0" y="469.9" font-size="6.8" textLength="44.8" lengthAdjust="spacingAndGlyphs">SEP(09)  09/29</text><text x="315.0" y="478.0" font-size="6.2" textLength="30.0" lengthAdjust="spacingAndGlyphs" fill="#888">All Workers</text><text x="315.0" y="488.1" font-size="6.2" textLength="38.0" lengthAdjust="spacingAndGlyphs" fill="#888">Nonsupervisory</text><text x="315.0" y="494.5" font-size="6.2" textLength="22.0" lengthAdjust="spacingAndGlyphs" fill="#888">Workers</text><rect x="408" y="481" width="34" height="15" fill="url(#hatch)"/><path d="M448.2 470.2Q448.2 469.2 446.7 469.2Q445.2 469.2 445.2 470.5Q445.2 471.7 446.7 472.0Q448.2 472.3 448.2 473.5Q448.2 474.8 446.7 474.8Q445.2 474.8 445.2 473.8M446.7 468.2V475.8" fill="none" stroke="#000" stroke-width="1.1"/><path d="M504.2 470.2Q504.2 469.2 502.7 469.2Q501.2 469.2 501.2 470.5Q501.2 471.7 502.7 472.0Q504.2 472.3 504.2 473.5Q504.2 474.8 502.7 474.8Q501.2 474.8 501.2 473.8M502.7 468.2V475.8" fill="none" stroke="#000" stroke-width="1.1"/><path d="M448.2 487.0Q448.2 486.0 446.7 486.0Q445.2 486.0 445.2 487.3Q445.2 488.5 446.7 488.8Q448.2 489.1 448.2 490.3Q448.2 491.6 446.7 491.6Q445.2 491.6 445.2 490.6M446.7 485.0V492.6" fill="none" stroke="#000" stroke-width="1.1"/><path d="M504.2 487.0Q504.2 486.0 502.7 486.0Q501.2 486.0 501.2 487.3Q501.2 488.5 502.7 488.8Q504.2 489.1 504.2 490.3Q504.2 491.6 502.7 491.6Q501.2 491.6 501.2 490.6M502.7 485.0V492.6" fill="none" stroke="#000" stroke-width="1.1"/><path d="M631.0 475.0Q631.0 474.0 629.5 474.0Q628.0 474.0 628.0 475.3Q628.0 476.5 629.5 476.8Q631.0 477.1 631.0 478.3Q631.0 479.6 629.5 479.6Q628.0 479.6 628.0 478.6M629.5 473.0V480.6" fill="none" stroke="#000" stroke-width="1.1"/><path d="M307 531.5H721" stroke="#000"/><path d="M308 514.5H590" stroke="#000" stroke-dasharray="1 1"/><text x="315.0" y="503.9" font-size="6.8" textLength="44.8" lengthAdjust="spacingAndGlyphs">OCT(10)  10/27</text><text x="315.0" y="512.0" font-size="6.2" textLength="30.0" lengthAdjust="spacingAndGlyphs" fill="#888">All Workers</text><text x="315.0" y="522.1" font-size="6.2" textLength="38.0" lengthAdjust="spacingAndGlyphs" fill="#888">Nonsupervisory</text><text x="315.0" y="528.5" font-size="6.2" textLength="22.0" lengthAdjust="spacingAndGlyphs" fill="#888">Workers</text><rect x="408" y="515" width="34" height="16" fill="url(#hatch)"/><path d="M448.2 504.2Q448.2 503.2 446.7 503.2Q445.2 503.2 445.2 504.5Q445.2 505.7 446.7 506.0Q448.2 506.3 448.2 507.5Q448.2 508.8 446.7 508.8Q445.2 508.8 445.2 507.8M446.7 502.2V509.8" fill="none" stroke="#000" stroke-width="1.1"/><path d="M504.2 504.2Q504.2 503.2 502.7 503.2Q501.2 503.2 501.2 504.5Q501.2 505.7 502.7 506.0Q504.2 506.3 504.2 507.5Q504.2 508.8 502.7 508.8Q501.2 508.8 501.2 507.8M502.7 502.2V509.8" fill="none" stroke="#000" stroke-width="1.1"/><path d="M448.2 521.0Q448.2 520.0 446.7 520.0Q445.2 520.0 445.2 521.3Q445.2 522.5 446.7 522.8Q448.2 523.1 448.2 524.3Q448.2 525.6 446.7 525.6Q445.2 525.6 445.2 524.6M446.7 519.0V526.6" fill="none" stroke="#000" stroke-width="1.1"/><path d="M504.2 521.0Q504.2 520.0 502.7 520.0Q501.2 520.0 501.2 521.3Q501.2 522.5 502.7 522.8Q504.2 523.1 504.2 524.3Q504.2 525.6 502.7 525.6Q501.2 525.6 501.2 524.6M502.7 519.0V526.6" fill="none" stroke="#000" stroke-width="1.1"/><path d="M631.0 509.5Q631.0 508.5 629.5 508.5Q628.0 508.5 628.0 509.8Q628.0 511.0 629.5 511.3Q631.0 511.6 631.0 512.8Q631.0 514.1 629.5 514.1Q628.0 514.1 628.0 513.1M629.5 507.5V515.1" fill="none" stroke="#000" stroke-width="1.1"/><path d="M307 565.5H721" stroke="#000"/><path d="M308 549.5H590" stroke="#000" stroke-dasharray="1 1"/><text x="315.0" y="538.9" font-size="6.8" textLength="44.8" lengthAdjust="spacingAndGlyphs">NOV(11)  11/24</text><text x="315.0" y="547.0" font-size="6.2" textLength="30.0" lengthAdjust="spacingAndGlyphs" fill="#888">All Workers</text><text x="315.0" y="557.1" font-size="6.2" textLength="38.0" lengthAdjust="spacingAndGlyphs" fill="#888">Nonsupervisory</text><text x="315.0" y="563.5" font-size="6.2" textLength="22.0" lengthAdjust="spacingAndGlyphs" fill="#888">Workers</text><rect x="408" y="550" width="34" height="15" fill="url(#hatch)"/><path d="M448.2 539.2Q448.2 538.2 446.7 538.2Q445.2 538.2 445.2 539.5Q445.2 540.7 446.7 541.0Q448.2 541.3 448.2 542.5Q448.2 543.8 446.7 543.8Q445.2 543.8 445.2 542.8M446.7 537.2V544.8" fill="none" stroke="#000" stroke-width="1.1"/><path d="M504.2 539.2Q504.2 538.2 502.7 538.2Q501.2 538.2 501.2 539.5Q501.2 540.7 502.7 541.0Q504.2 541.3 504.2 542.5Q504.2 543.8 502.7 543.8Q501.2 543.8 501.2 542.8M502.7 537.2V544.8" fill="none" stroke="#000" stroke-width="1.1"/><path d="M448.2 556.0Q448.2 555.0 446.7 555.0Q445.2 555.0 445.2 556.3Q445.2 557.5 446.7 557.8Q448.2 558.1 448.2 559.3Q448.2 560.6 446.7 560.6Q445.2 560.6 445.2 559.6M446.7 554.0V561.6" fill="none" stroke="#000" stroke-width="1.1"/><path d="M504.2 556.0Q504.2 555.0 502.7 555.0Q501.2 555.0 501.2 556.3Q501.2 557.5 502.7 557.8Q504.2 558.1 504.2 559.3Q504.2 560.6 502.7 560.6Q501.2 560.6 501.2 559.6M502.7 554.0V561.6" fill="none" stroke="#000" stroke-width="1.1"/><path d="M631.0 544.0Q631.0 543.0 629.5 543.0Q628.0 543.0 628.0 544.3Q628.0 545.5 629.5 545.8Q631.0 546.1 631.0 547.3Q631.0 548.6 629.5 548.6Q628.0 548.6 628.0 547.6M629.5 542.0V549.6" fill="none" stroke="#000" stroke-width="1.1"/><path d="M307 598.5H721" stroke="#000"/><path d="M308 583.5H590" stroke="#000" stroke-dasharray="1 1"/><text x="315.0" y="572.9" font-size="6.8" textLength="44.8" lengthAdjust="spacingAndGlyphs">DEC(12)  12/27</text><text x="315.0" y="581.0" font-size="6.2" textLength="30.0" lengthAdjust="spacingAndGlyphs" fill="#888">All Workers</text><text x="315.0" y="591.1" font-size="6.2" textLength="38.0" lengthAdjust="spacingAndGlyphs" fill="#888">Nonsupervisory</text><text x="315.0" y="597.5" font-size="6.2" textLength="22.0" lengthAdjust="spacingAndGlyphs" fill="#888">Workers</text><rect x="408" y="584" width="34" height="14" fill="url(#hatch)"/><path d="M448.2 573.2Q448.2 572.2 446.7 572.2Q445.2 572.2 445.2 573.5Q445.2 574.7 446.7 575.0Q448.2 575.3 448.2 576.5Q448.2 577.8 446.7 577.8Q445.2 577.8 445.2 576.8M446.7 571.2V578.8" fill="none" stroke="#000" stroke-width="1.1"/><path d="M504.2 573.2Q504.2 572.2 502.7 572.2Q501.2 572.2 501.2 573.5Q501.2 574.7 502.7 575.0Q504.2 575.3 504.2 576.5Q504.2 577.8 502.7 577.8Q501.2 577.8 501.2 576.8M502.7 571.2V578.8" fill="none" stroke="#000" stroke-width="1.1"/><path d="M448.2 590.0Q448.2 589.0 446.7 589.0Q445.2 589.0 445.2 590.3Q445.2 591.5 446.7 591.8Q448.2 592.1 448.2 593.3Q448.2 594.6 446.7 594.6Q445.2 594.6 445.2 593.6M446.7 588.0V595.6" fill="none" stroke="#000" stroke-width="1.1"/><path d="M504.2 590.0Q504.2 589.0 502.7 589.0Q501.2 589.0 501.2 590.3Q501.2 591.5 502.7 591.8Q504.2 592.1 504.2 593.3Q504.2 594.6 502.7 594.6Q501.2 594.6 501.2 593.6M502.7 588.0V595.6" fill="none" stroke="#000" stroke-width="1.1"/><path d="M631.0 577.5Q631.0 576.5 629.5 576.5Q628.0 576.5 628.0 577.8Q628.0 579.0 629.5 579.3Q631.0 579.6 631.0 580.8Q631.0 582.1 629.5 582.1Q628.0 582.1 628.0 581.1M629.5 575.5V583.1" fill="none" stroke="#000" stroke-width="1.1"/><text x="374.7" y="371.0" font-size="9.8" textLength="18.2" lengthAdjust="spacingAndGlyphs">1245</text><text x="374.7" y="388.5" font-size="9.8" textLength="18.2" lengthAdjust="spacingAndGlyphs">1200</text><text x="417.8" y="371.0" font-size="9.8" textLength="14.5" lengthAdjust="spacingAndGlyphs">987</text><text x="450.5" y="371.9" font-size="9.8">$</text><text x="463.9" y="371.9" font-size="9.8" textLength="23.1" lengthAdjust="spacingAndGlyphs">45792</text><text x="450.5" y="388.9" font-size="9.8">$</text><text x="463.9" y="388.9" font-size="9.8" textLength="23.1" lengthAdjust="spacingAndGlyphs">40012</text><text x="505.6" y="372.0" font-size="9.8">$</text><text x="519.0" y="372.0" font-size="9.8" textLength="19.2" lengthAdjust="spacingAndGlyphs">5874</text><text x="505.6" y="388.9" font-size="9.8">$</text><text x="519.0" y="388.9" font-size="9.8" textLength="19.2" lengthAdjust="spacingAndGlyphs">5002</text><text x="557.3" y="370.9" font-size="9.8" textLength="20.2" lengthAdjust="spacingAndGlyphs">4579</text><text x="557.3" y="388.5" font-size="9.8" textLength="20.2" lengthAdjust="spacingAndGlyphs">3987</text><text x="595.5" y="379.9" font-size="9.8" textLength="22.9" lengthAdjust="spacingAndGlyphs">01,13</text><text x="636.6" y="379.5" font-size="9.8">$</text><text x="648.3" y="379.5" font-size="9.8" textLength="28.1" lengthAdjust="spacingAndGlyphs">198562</text><text x="310.8" y="605.3" font-size="6.5" textLength="410.4" lengthAdjust="spacingAndGlyphs"><tspan>D.   Reason for Large Changes: </tspan><tspan>To explain changes of 25% or more, enter numbers from the list below into columns 6 and 8. You may enter</tspan></text><text x="319.8" y="611.3" font-size="6.5" textLength="142.6" lengthAdjust="spacingAndGlyphs">one or two numbers per month in each column.</text><rect x="306.5" y="612.5" width="155" height="51" fill="none" stroke="#000"/><path d="M306 626.5H462" stroke="#000"/><path d="M377.5 626V664" stroke="#000"/><rect x="463.5" y="612.5" width="154" height="51" fill="none" stroke="#000"/><path d="M463 626.5H618" stroke="#000"/><path d="M540.5 626V664" stroke="#000"/><rect x="619.5" y="612.5" width="100" height="51" fill="none" stroke="#000"/><path d="M619 626.5H720" stroke="#000"/><text x="309.0" y="622.2" font-size="7" textLength="11.0" lengthAdjust="spacingAndGlyphs" font-weight="bold">D1.</text><text x="323.0" y="622.0" font-size="6.5" textLength="120.0" lengthAdjust="spacingAndGlyphs" fill="#666">Changes in Employment  (Columns 6 and 8)</text><text x="465.5" y="622.2" font-size="7" textLength="11.5" lengthAdjust="spacingAndGlyphs" font-weight="bold">D2.</text><text x="480.0" y="622.0" font-size="6.5" textLength="123.0" lengthAdjust="spacingAndGlyphs" fill="#666">Changes in Pay and Hours  (Columns 6 and 8)</text><text x="622.0" y="619.8" font-size="6.5" textLength="11.0" lengthAdjust="spacingAndGlyphs" font-weight="bold">D3.</text><text x="636.0" y="619.1" font-size="5.8" textLength="74.0" lengthAdjust="spacingAndGlyphs" fill="#666">Changes in Gross Monthly</text><text x="636.0" y="624.4" font-size="5.8" textLength="75.0" lengthAdjust="spacingAndGlyphs" fill="#666">Earnings (Column 8 ONLY)</text><text x="309.0" y="631.7" font-size="6.0" textLength="51.5" lengthAdjust="spacingAndGlyphs" fill="#888">01  Seasonal increase</text><text x="309.0" y="637.2" font-size="6.0" textLength="53.2" lengthAdjust="spacingAndGlyphs" fill="#888">02  Seasonal decrease</text><text x="309.0" y="642.2" font-size="6.0" textLength="67.0" lengthAdjust="spacingAndGlyphs" fill="#888">03  More business/expansion</text><text x="309.0" y="647.4" font-size="6.0" textLength="67.0" lengthAdjust="spacingAndGlyphs" fill="#888">04  Less business/contraction</text><text x="309.0" y="652.5" font-size="6.0" textLength="67.0" lengthAdjust="spacingAndGlyphs" fill="#888">05  Short-term project starting</text><text x="309.0" y="658.3" font-size="6.0" textLength="67.0" lengthAdjust="spacingAndGlyphs" fill="#888">06  Short-term project ending</text><text x="309.0" y="663.0" font-size="6.0" textLength="22.7" lengthAdjust="spacingAndGlyphs" fill="#888">07  Layoff</text><text x="380.0" y="631.7" font-size="6.0" textLength="22.0" lengthAdjust="spacingAndGlyphs" fill="#888">08  Strike</text><text x="380.0" y="637.2" font-size="6.0" textLength="80.0" lengthAdjust="spacingAndGlyphs" fill="#888">12  Internal reorganization-decrease</text><text x="380.0" y="642.2" font-size="6.0" textLength="80.0" lengthAdjust="spacingAndGlyphs" fill="#888">13  Internal reorganization-increase</text><text x="380.0" y="647.4" font-size="6.0" textLength="78.3" lengthAdjust="spacingAndGlyphs" fill="#888">19  Employment returns to normal</text><text x="380.0" y="652.5" font-size="6.0" textLength="56.8" lengthAdjust="spacingAndGlyphs" fill="#888">09  Temporary shutdown</text><text x="380.0" y="658.3" font-size="6.0" textLength="57.8" lengthAdjust="spacingAndGlyphs" fill="#888">86  Permanent shutdown</text><text x="380.0" y="663.0" font-size="6.0" textLength="39.0" lengthAdjust="spacingAndGlyphs" fill="#888">37  Other reason</text><text x="466.0" y="631.7" font-size="6.0" textLength="55.3" lengthAdjust="spacingAndGlyphs" fill="#888">20  Wage rate decrease</text><text x="466.0" y="637.2" font-size="6.0" textLength="53.6" lengthAdjust="spacingAndGlyphs" fill="#888">21  Wage rate increase</text><text x="466.0" y="642.2" font-size="6.0" textLength="68.5" lengthAdjust="spacingAndGlyphs" fill="#888">25  Higher hourly earnings for</text><text x="475.5" y="647.4" font-size="6.0" textLength="61.3" lengthAdjust="spacingAndGlyphs" fill="#888">piecework or incentive pay</text><text x="466.0" y="652.5" font-size="6.0" textLength="50.9" lengthAdjust="spacingAndGlyphs" fill="#888">26  Less overtime pay</text><text x="466.0" y="658.3" font-size="6.0" textLength="51.7" lengthAdjust="spacingAndGlyphs" fill="#888">27  More overtime pay</text><text x="466.0" y="663.0" font-size="6.0" textLength="73.0" lengthAdjust="spacingAndGlyphs" fill="#888">32  More/fewer commissions paid</text><text x="543.3" y="631.7" font-size="6.0" textLength="72.7" lengthAdjust="spacingAndGlyphs" fill="#888">40  Shorter scheduled workweek</text><text x="543.3" y="637.2" font-size="6.0" textLength="72.7" lengthAdjust="spacingAndGlyphs" fill="#888">41  Longer scheduled workweek</text><text x="543.3" y="642.2" font-size="6.0" textLength="72.7" lengthAdjust="spacingAndGlyphs" fill="#888">46  Workers on unpaid vacation</text><text x="543.3" y="647.4" font-size="6.0" textLength="37.9" lengthAdjust="spacingAndGlyphs" fill="#888">50  Bad weather</text><text x="543.3" y="652.5" font-size="6.0" textLength="69.1" lengthAdjust="spacingAndGlyphs" fill="#888">55  Return to normal following</text><text x="552.8" y="658.3" font-size="6.0" textLength="28.6" lengthAdjust="spacingAndGlyphs" fill="#888">bad weather</text><text x="543.3" y="663.0" font-size="6.0" textLength="70.8" lengthAdjust="spacingAndGlyphs" fill="#888">38  Other reason, pay or hours</text><text x="621.2" y="631.7" font-size="6.0" textLength="96.8" lengthAdjust="spacingAndGlyphs" fill="#888">28  Stock options exercised and distributed</text><text x="621.2" y="637.2" font-size="6.0" textLength="68.8" lengthAdjust="spacingAndGlyphs" fill="#888">29  Severance pay distributed</text><text x="621.2" y="642.2" font-size="6.0" textLength="85.6" lengthAdjust="spacingAndGlyphs" fill="#888">30  Change in number of pay periods</text><text x="621.2" y="647.4" font-size="6.0" textLength="83.7" lengthAdjust="spacingAndGlyphs" fill="#888">31  Bonuses, executive pay, or profit</text><text x="630.7" y="652.5" font-size="6.0" textLength="27.7" lengthAdjust="spacingAndGlyphs" fill="#888">distributions</text><text x="621.2" y="658.3" font-size="6.0" textLength="95.9" lengthAdjust="spacingAndGlyphs" fill="#888">93  Quarterly or annual commissions paid</text><text x="621.2" y="663.0" font-size="6.0" textLength="39.0" lengthAdjust="spacingAndGlyphs" fill="#888">95  Other reason</text><text x="668.4" y="674.0" font-size="5.6" textLength="58.5" lengthAdjust="spacingAndGlyphs" fill="#999">BLS790E  Rev July 2006</text></svg><!--/PAGE-->
</body></html>
